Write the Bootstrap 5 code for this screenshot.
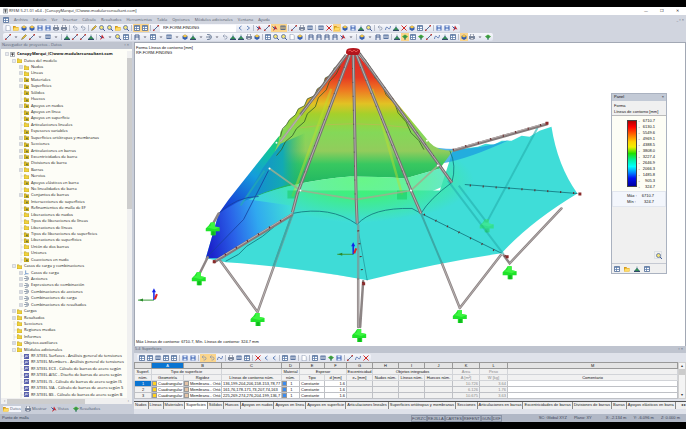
<!DOCTYPE html>
<html lang="es">
<head>
<meta charset="utf-8">
<meta name="viewport" content="width=device-width, initial-scale=1">
<title>RFEM 5.21.01 x64 - [CanopyMarqui_(C)www.modularconsultant.com]</title>
<link rel="stylesheet" href="https://cdn.jsdelivr.net/npm/bootstrap@5.3.0/dist/css/bootstrap.min.css">
<style>
  body { font: 4px/6px "Open Sans", "Noto Sans", sans-serif; color: #222; background: #000; white-space: nowrap; overflow: hidden; }
  button, select { font: inherit; color: inherit; border: 0; padding: 0; background: none; }
  a, a:hover { color: inherit; text-decoration: none; }
  svg { display: block; }
  .app { min-height: 100vh; padding: 7px 0; }
  .window { background: #d1d5df; min-width: 0; }
  .titlebar { height: 8px; background: #fff; padding: 0 4px 0 3px; }
  .titlebar .caps { gap: 12px; padding-right: 3px; }
  .menubar { height: 9px; padding: 0 2px 0 3px; gap: 5px; color: #555c6c; }
  .toolrow { height: 9px; padding-left: 3px; }
  .strip { height: 8px; background: linear-gradient(#f7f8fc, #dfe3ee); border-radius: 2px; padding: 0 1px; }
  .tool { width: 8px; height: 8px; padding: 1px; flex: none; }
  .tool.on { background: #fbd58c; }
  .tool svg { width: 6px; height: 6px; }
  .rule { width: 1px; height: 6px; background: #b8bdca; margin: 0 1px; }
  .combo { width: 76px; height: 7px; background: #fff; appearance: none; padding: 0 3px; font-family: "Liberation Sans", sans-serif; color: #111; }
  .side { width: 134px; flex: none; padding: 0 2px 0 1px; background: #c9ced9; }
  .panehead { height: 7px; background: #bfc4cf; color: #596579; padding: 0 3px 0 1px; }
  .tree { background: #fdfdf7; min-height: 0; padding-top: 2px; font-family: "Open Sans", "Noto Sans", sans-serif; color: #111; }
  .tree ul { margin: 0; padding: 0; list-style: none; }
  .tree li { flex: 1 1 0; min-height: 0; overflow: hidden; padding-left: 3px; }
  .tree li.l1 { padding-left: 10px; }
  .tree li.l2 { padding-left: 17px; }
  .twig { width: 6px; height: 6px; flex: none; }
  .leaf { width: 5px; height: 5px; flex: none; margin-right: 2px; }
  .vbar { width: 5px; background: #f0f0f0; padding-top: 7px; color: #555; }
  .vbar .thumb { height: 151px; background: #cdcdcd; }
  .hbar { height: 6px; background: #f0f0f0; color: #444; padding: 0 3px; gap: 2px; }
  .hbar .thumb { width: 78px; height: 5px; background: #cdcdcd; }
  .sidetabs { height: 10px; gap: 4px; padding: 1px 2px; color: #4c5972; }
  .sidetabs a svg { width: 6px; height: 6px; margin-right: 1px; }
  .sidetabs a.active { background: #f4f6fb; }
  .view { background: #fff; border: 1px solid #a2a8b4; border-width: 1px 1px 0 1px; font-family: "Liberation Sans", sans-serif; line-height: 5px; color: #111; }
  .view .note { padding: 2px 1px; z-index: 1; }
  .legend { top: 50px; right: 18px; width: 56px; height: 181px; background: #f0f0f0; border: 1px solid #aab2c0; font-family: "Liberation Sans", sans-serif; z-index: 2; }
  .legend .cap { height: 7px; background: #c3cad6; padding: 0 2px; }
  .legend .names { padding: 2px 2px 0; line-height: 6px; }
  .legend .scale { background: #fdfdf5; border-top: 1px solid #bbb; height: 76px; padding: 4px 11px 4px 15px; }
  .legend .ramp { width: 10px; height: 67px; border: 1px solid #444; background: linear-gradient(#b00000, #ff0000 9%, #ff5000 18%, #ffd000 32%, #f0f000 40%, #20e000 50%, #00f0a0 60%, #00ffff 70%, #0080ff 80%, #0010f0 88%, #0000a0); }
  .legend .ticks { line-height: 6px; margin: -2px 0; }
  .legend .ticks span::before { content: "-"; float: left; margin-right: 3px; }
  .legend .peaks { background: #f3f6fc; height: 16px; padding: 1px 11px 1px 14px; border: 1px solid #e2e6ee; line-height: 6px; }
  .legend .foot { height: 10px; border-top: 1px solid #c5c9d2; padding: 1px 1px; gap: 2px; }
  .lower { background: #dfe2ea; height: 68px; font-family: "Liberation Sans", sans-serif; }
  .grid { width: 100%; table-layout: fixed; border-collapse: collapse; line-height: 5px; background: #f1f1f1; color: #111; }
  .grid th, .grid td { border: 1px solid #bfc1c6; padding: 0 1px; height: 6px; font-weight: 400; overflow: hidden; }
  .grid td { padding: 0 1px 0 0; }
  .grid thead th { text-align: center; padding: 0; border-color: #d2d4d8; }
  .grid thead tr:first-child th { background: #e4e4e4; border-color: #999; }
  .grid thead tr:first-child th.sel, .grid .cur { background: #0a74d1; color: #fff; }
  .grid tbody th { text-align: center; }
  .grid tbody td.w { background: #fff; }
  .grid tbody td.text { padding-left: 1px; }
  .grid .dim { color: #8b8b8b; }
  .sw { display: inline-block; width: 5px; height: 5px; margin-right: 1px; border: 1px solid #999; vertical-align: top; }
  .yl { background: #ffd21f; } .tn { background: #e5c4a8; } .bl { background: #3b8cf0; }
  .colscroll { width: 8px; background: #f4f4f4; color: #333; font-size: 4px; border: 1px solid #d0d0d0; }
  .colscroll .thumb { height: 6px; background: #ccc; }
  .sheets { height: 8px; background: #f0f0f0; margin-top: 2px; border-top: 1px solid #555; overflow: hidden; }
  .sheets a { padding: 0 1px; border-right: 1px solid #888; line-height: 6px; height: 7px; }
  .sheets a.active { background: #fff; }
  .status { height: 8px; background: #b1b8c6; padding: 0 6px 0 2px; color: #3c4456; font-family: "Liberation Sans", sans-serif; }
  .status .modes { margin-right: 37px; }
  .status .modes button { border: 1px solid #8a93a5; line-height: 5px; }
  .status .coords { gap: 7px; }
</style>
<script src="https://cdn.jsdelivr.net/npm/bootstrap@5.3.0/dist/js/bootstrap.bundle.min.js"></script>
</head>
<body>
<svg width="0" height="0" class="position-absolute" aria-hidden="true">
  <symbol id="i-page" viewBox="0 0 12 12"><path d="M2 .5h6l2.500 3v8H2z" fill="#fff" stroke="#7583a0"/></symbol>
  <symbol id="i-open" viewBox="0 0 12 12"><path d="M0 2h5l1 2h5v7H0z" fill="#d59b18"/><path d="M2 5h10l-2 6H0z" fill="#ffdc65"/></symbol>
  <symbol id="i-save" viewBox="0 0 12 12"><path d="M1 1h10v10H1z" fill="#385fb0"/><path d="M3 1h6v4H3zM3 7h6v4H3z" fill="#dbe8fa"/></symbol>
  <symbol id="i-cube" viewBox="0 0 12 12"><path d="M1 4l5-3 5 3v5l-5 3-5-3z" fill="#355fae"/><path d="M1 4l5-3 5 3-5 3z" fill="#f4c545"/></symbol>
  <symbol id="i-print" viewBox="0 0 12 12"><path d="M0 4h12v6H0z" fill="#7a879d"/><path d="M3 0h6v5H3zM3 8h6v3H3z" fill="#fff" stroke="#56617a"/></symbol>
  <symbol id="i-undo" viewBox="0 0 12 12"><path d="M3 4h5q3 1 2 4t-5 2M5 1L2 4l3 3" fill="none" stroke="#8b97ac" stroke-width="1.500"/></symbol>
  <symbol id="i-pen" viewBox="0 0 12 12"><path d="M1 11l2-4 6-6 2 2-6 6z" fill="#edc22e" stroke="#675a32"/></symbol>
  <symbol id="i-lens" viewBox="0 0 12 12"><circle cx="5" cy="5" r="4" fill="#f3e478" stroke="#4963a0" stroke-width="1.500"/><path d="M8 8l4 4" stroke="#455e98" stroke-width="2"/></symbol>
  <symbol id="i-table" viewBox="0 0 12 12"><path d="M1 1h10v10H1z" fill="#fff" stroke="#44628f" stroke-width="1.500"/><path d="M1 3h10M1 7h10M5 1v10" stroke="#5879a9" stroke-width="1.500"/></symbol>
  <symbol id="i-node" viewBox="0 0 12 12"><path d="M1 11L11 1" stroke="#546f9b" stroke-width="2"/><path d="M0 9h3v3H0zM9 0h3v3H9z" fill="#bc3f38"/></symbol>
  <symbol id="i-frame" viewBox="0 0 12 12"><path d="M2 12V2h8v10M2 6h8" fill="none" stroke="#4c6592" stroke-width="2"/></symbol>
  <symbol id="i-support" viewBox="0 0 12 12"><path d="M6 1v4M1 10l5-6 5 6z" fill="#379848" stroke="#255b76"/><path d="M0 11h12" stroke="#314968" stroke-width="2"/></symbol>
  <symbol id="i-load" viewBox="0 0 12 12"><path d="M1 2h10M2 2v6M6 2v6M10 2v6M1 9h10" fill="none" stroke="#284b84" stroke-width="1.500"/></symbol>
  <symbol id="i-cross" viewBox="0 0 12 12"><path d="M1 1l10 10M11 1L1 11" stroke="#d12b29" stroke-width="2"/></symbol>
  <symbol id="i-curve" viewBox="0 0 12 12"><path d="M1 10Q2 1 6 6T11 2" fill="none" stroke="#4263a5" stroke-width="1.500"/></symbol>
  <symbol id="i-red" viewBox="0 0 12 12"><path d="M2 12l4-11 5 8-4-1z" fill="#c22f38"/><path d="M1 3l5 5" stroke="#2955a0" stroke-width="2"/></symbol>
  <symbol id="i-green" viewBox="0 0 12 12"><path d="M0 5l6-4 6 4-6 5z" fill="#42a73a"/><path d="M6 4v8" stroke="#376" stroke-width="2"/></symbol>
  <symbol id="i-combo" viewBox="0 0 12 12"><path d="M2 1h4q5 1 5 5t-5 5H2M0 6h8M6 3l3 3-3 3" fill="none" stroke="#3d5376" stroke-width="1.300"/></symbol>
  <symbol id="i-axes" viewBox="0 0 12 12"><path d="M4 1v8h7M4 9l-3 3" fill="none" stroke="#2c66b8" stroke-width="1.500"/></symbol>
  <symbol id="i-prev" viewBox="0 0 12 12"><path d="M9 2L4 6l5 4" fill="none" stroke="#305ca4" stroke-width="1.500"/></symbol>
  <symbol id="i-next" viewBox="0 0 12 12"><path d="M4 2l5 4-5 4" fill="none" stroke="#305ca4" stroke-width="1.500"/></symbol>
  <symbol id="i-drop" viewBox="0 0 12 12"><path d="M3 5h6L6 8z" fill="#667"/></symbol>
  <symbol id="i-fold" viewBox="0 0 12 12"><path d="M0 2h5l1 2h6v8H0z" fill="#f0d23c" stroke="#a48b20"/></symbol>
  <symbol id="i-item" viewBox="0 0 12 12"><path d="M0 2h5l1 2h6v8H0z" fill="#dfbd24" stroke="#93801f"/><path d="M4 10l3-5 3 5z" fill="#5b6e3c"/></symbol>
  <symbol id="i-mod" viewBox="0 0 12 12"><path d="M0 0h12v12H0z" fill="#5961ac"/><path d="M2 9l3-6 2 4 3-4" fill="none" stroke="#fff" stroke-width="1.500"/></symbol>
  <symbol id="i-root" viewBox="0 0 12 12"><path d="M1 1h10v10H1z" fill="#fff" stroke="#345"/><path d="M3 3h6M6 3v7M3 6h6" stroke="#222" stroke-width="1.500"/></symbol>
  <symbol id="t-plus" viewBox="0 0 6 6"><path d="M1.500 1.500h3v3h-3zM2 3h2M3 2v2" fill="#fff" stroke="#a6adba" stroke-width=".5"/></symbol>
  <symbol id="t-minus" viewBox="0 0 6 6"><path d="M1.500 1.500h3v3h-3zM2 3h2" fill="#fff" stroke="#a6adba" stroke-width=".5"/></symbol>
  <symbol id="t-none" viewBox="0 0 6 6"><path d="M3 0v6M3 3h3" stroke="#c9cbd0" stroke-width=".5"/></symbol>
</svg>

<div class="app d-flex flex-column">
<div class="window d-flex flex-column flex-fill">
  <header>
    <div class="titlebar d-flex align-items-center justify-content-between">
      <span class="d-flex align-items-center"><svg width="5" height="6"><use href="#i-root"/></svg><span>&nbsp;RFEM 5.21.01 x64 - [CanopyMarqui_(C)www.modularconsultant.com]</span></span>
      <span class="caps d-flex"><button aria-label="Minimizar">—</button><button aria-label="Restaurar">❐</button><button aria-label="Cerrar">✕</button></span>
    </div>
    <nav class="menubar d-flex align-items-center">
      <svg width="6" height="6"><use href="#i-table"/></svg>
      <a href="#">Archivo</a><a href="#">Edición</a><a href="#">Ver</a><a href="#">Insertar</a><a href="#">Cálculo</a><a href="#">Resultados</a><a href="#">Herramientas</a><a href="#">Tabla</a><a href="#">Opciones</a><a href="#">Módulos adicionales</a><a href="#">Ventana</a><a href="#">Ayuda</a>
      <span class="ms-auto">_ ▫ ×</span>
    </nav>
    <div class="toolrow d-flex">
      <div class="strip d-flex align-items-center">
        <div class="d-flex align-items-center" data-tools="page open cube cube save save print print | undo undo | pen lens lens open lens | *table *table | node"></div>
        <select class="combo" aria-label="Caso de carga"><option>RF-FORM-FINDING</option></select>
        <div class="d-flex align-items-center" data-tools="prev next | red node *red *load | node print load | load cross *open cube save support lens | undo curve support cross cube table node | save save red"></div>
      </div>
    </div>
    <div class="toolrow d-flex">
      <div class="strip d-flex align-items-center" data-tools="node drop pen node drop load drop | support node node support | red drop lens table | frame drop table drop load drop cube support drop combo drop undo support support print cube | table lens lens page cube | frame frame frame frame red drop | cube drop frame load | support *green table green node curve support table | *cube print drop green"></div>
    </div>
  </header>

  <div class="d-flex flex-fill">
    <aside class="side d-flex flex-column">
      <div class="panehead d-flex justify-content-between"><span>Navegador de proyectos - Datos</span><span>▫ ×</span></div>
      <div class="tree d-flex flex-fill">
        <ul class="d-flex flex-column flex-fill overflow-hidden" id="tree"></ul>
        <div class="vbar"><div class="thumb"></div></div>
      </div>
      <div class="hbar d-flex align-items-center"><span>‹</span><span class="thumb"></span><span class="ms-auto">›</span></div>
      <nav class="sidetabs d-flex align-items-center">
        <a href="#" class="active d-flex align-items-center"><svg><use href="#i-open"/></svg>Datos</a>
        <a href="#" class="d-flex align-items-center"><svg><use href="#i-print"/></svg>Mostrar</a>
        <a href="#" class="d-flex align-items-center"><svg><use href="#i-red"/></svg>Vistas</a>
        <a href="#" class="d-flex align-items-center"><svg><use href="#i-green"/></svg>Resultados</a>
      </nav>
    </aside>

    <main class="d-flex flex-column flex-fill overflow-hidden">
      <section class="view position-relative d-flex flex-column justify-content-between flex-fill">
        <svg class="position-absolute top-0 start-0 w-100 h-100" viewBox="134 42 552 304" role="img" aria-label="Modelo de membrana">
          <defs>
            <linearGradient id="cone" gradientUnits="userSpaceOnUse" x1="0" y1="50" x2="0" y2="182">
              <stop offset="0" stop-color="#d8282c"/><stop offset=".2" stop-color="#e63a22"/><stop offset=".3" stop-color="#ee7a22"/><stop offset=".4" stop-color="#e2c224"/><stop offset=".48" stop-color="#a4d02c"/><stop offset=".62" stop-color="#84d858"/><stop offset=".76" stop-color="#92cc5c"/><stop offset=".86" stop-color="#38c860"/><stop offset="1" stop-color="#22b862"/>
            </linearGradient>
            <linearGradient id="flank" gradientUnits="userSpaceOnUse" x1="284" y1="132" x2="214" y2="216">
              <stop offset="0" stop-color="#30cc58"/><stop offset=".22" stop-color="#10c49c"/><stop offset=".48" stop-color="#159ddb"/><stop offset=".78" stop-color="#164fd8"/><stop offset="1" stop-color="#1522c4"/>
            </linearGradient>
            <linearGradient id="skirt" gradientUnits="userSpaceOnUse" x1="208" y1="238" x2="292" y2="222">
              <stop offset="0" stop-color="#1c24cc"/><stop offset=".3" stop-color="#2a62e8"/><stop offset=".6" stop-color="#30a8f0"/><stop offset="1" stop-color="#3fddd8"/>
            </linearGradient>
            <linearGradient id="inner" gradientUnits="userSpaceOnUse" x1="248" y1="0" x2="305" y2="0"><stop offset="0" stop-color="#1586d8"/><stop offset=".6" stop-color="#12a9b4"/><stop offset="1" stop-color="#22b862" stop-opacity="0"/></linearGradient>
            <radialGradient id="glow" gradientUnits="userSpaceOnUse" cx="0" cy="0" r="1" gradientTransform="translate(362 180) scale(112 42)">
              <stop offset="0" stop-color="#42f46c"/><stop offset=".4" stop-color="#40ee84"/><stop offset="1" stop-color="#3fddd8"/>
            </radialGradient>
            <g id="foot"><path d="M-2-5h4v4l5 1v4H3v4h-5V4h-5V1l3-3z" fill="#1fe32a"/><path d="M-2-5h4v4l5 1-5 2-8-2 4-2z" fill="#3cf540"/><path d="M-1 4h3v4h-3z" fill="#12b81f"/></g>
            <path id="wave" d="M346 54l-5 5-1 5-6 3-3 7-6 3-2 7-6 4-3 7-7 3-3 7-6 3-3 6-6 5-3 5-4 4-2 8"/>
          </defs>
          <!-- membrane -->
          <path d="M453 150L470 147 478 146 486 143 494 144 502 140 512 140 522 135 530 136 540 130 552 126Q558 165 578 193Q530 222 502 253Q440 262 367 280Q300 267 225 262L205 258 218 213 250 190H440z" fill="url(#glow)"/>
          <path d="M437 147Q470 152 510 139Q470 158 441 163z" fill="#1b9ce0" opacity=".75"/>
          <path d="M218 213L250 190 298 183Q285 200 292 213L222 258 205 258z" fill="url(#skirt)"/>
          <path d="M278 136L228 199 218 213Q238 200 250 196L300 182 320 110z" fill="url(#flank)"/>
          <path d="M346 54L341 59 340 64 334 67 331 74 325 77 323 84 317 88 314 95 307 98 304 105 298 108 295 114 289 119 286 124 280 131 278 141 268 168 248 199Q290 181 350 176Q380 176 405 178L440 168 453 150Q437 150 430 142L395 100 358 54z" fill="url(#cone)"/>
          <path d="M280 143L262 168 243 201Q275 186 305 180L310 130z" fill="url(#inner)"/>
          <path d="M248 199Q290 181 350 176Q380 176 405 178L440 168 452 182 400 205H290z" fill="url(#glow)" opacity=".8"/>
          <g fill="none" stroke="#d2a85a" stroke-width=".8" opacity=".6"><path d="M300 127Q350 119 410 127"/></g>
          <!-- rear columns seen through the membrane -->
          <g stroke="#bfe02c" stroke-width="2.500" opacity=".45"><path d="M331 88L292 196M372 88L402 194"/></g>
          <g fill="#14c85a" opacity=".5"><path d="M287 190h10v8h-10zM397 190h10v9h-10z"/></g>
          <g stroke="#25afae" stroke-width="2" opacity=".6"><path d="M538 127L487 222M448 180L504 254M459 185L487 222M264 170L240 205"/></g>
          <use href="#foot" x="487" y="224" opacity=".4"/>
          <!-- ring and seams -->
          <path d="M269 168L300 190 356 199 411 190 438 165" fill="none" stroke="#9fae8e" stroke-width="1.800" opacity=".85"/>
          <g fill="none" stroke="#107078" stroke-width=".8"><path d="M292 213Q330 205 357 224Q372 207 412 208L421 213Q430 198 452 182Q457 165 450 150"/><path d="M225 261L238 254 246 246 262 236 280 221 292 213"/><path d="M357 224L367 280M421 213L502 253M465 184L578 193"/><path d="M205 258L243 219 268 170M218 213Q236 196 258 196" stroke="#1740a0"/></g>
          <g fill="none" stroke="#355d28" stroke-width=".8"><use href="#wave"/><path d="M340 65l-4 8-7 8-3 8-8 8-3 9-8 7-3 8-8 7-4 7-7 6-4 8-5 6"/><path d="M364 57l8 12 3 8 8 9 3 8 9 9 3 9 8 9 5 11 8 8 5 9"/></g>
          <!-- legs -->
          <g stroke-linecap="round"><path stroke="#8d8585" stroke-width="2.500" fill="none" d="M292 214L257 312M220 261L257 312M358 225V327M363 281L360 327M442 263L460 308M501 255L460 308M562 208L510 263 504 255M207 257L199 273M218 213L213 222"/>
          <path d="M292 214L257 312M220 261L257 312M358 280V327M442 263L460 308M501 255L460 308M562 208L510 263" stroke="#c2baba" stroke-width=".8" fill="none"/></g>
          <path d="M274 266L292 214 357 224 421 213 442 262 367 279z" fill="#3fddd8" opacity=".4"/>
          <path d="M421 213L442 263M292 213L273 266" stroke="#3aa9a7" stroke-width="2"/>
          <!-- masts -->
          <g fill="none" stroke="#777173" stroke-width="3"><path d="M350 53L297 193 292 212M353 53L356 199 357 223M356 53L411 190 421 213M359 52L452 182M346 54L300 114"/></g>
          <path d="M300 114L280 141" stroke="#a59e96" stroke-width="2"/>
          <g fill="none" stroke="#b9b2b2" stroke-width="1"><path d="M350 53L297 193 292 212M353 53L356 199 357 223M356 53L411 190 421 213M359 52L452 182M346 54L280 141"/></g>
          <g fill="none" stroke="#5c5553" stroke-width="1" stroke-dasharray="1 13"><path d="M349 53L296 193M352 53L355 199M355 53L410 190M360 52L453 182"/></g>
          <!-- booms -->
          <g fill="none" stroke="#857a7a" stroke-width="3"><path d="M213 262L292 214M453 150L548 123"/></g>
          <path d="M213 261L292 213M453 149L548 122" stroke="#b9aeae" stroke-width="1"/>
          <g fill="none" stroke="#622" stroke-width="2" stroke-dasharray="1 12"><path d="M213 261L284 218M453 149L548 122.500M470 185L582 193M424 214L508 257M358 230L363 284" /></g>
          <path d="M579 192h3v3h-3zM506 255h3v3h-3zM362 282h3v3h-3zM546 121h3v3h-3zM212 260h3v3h-3z" fill="#8a2b2b"/>
          <path d="M346 50q0-3 7-3t7 3-2 4h-10q-3-1-2-4z" fill="#b3151c"/><path d="M348 50l2-1 2 2 2-2 2 2 2-2" fill="none" stroke="#f05c58"/>
          <g fill="#fff"><circle cx="276" cy="142" r="1"/><circle cx="269" cy="168" r="1"/><circle cx="300" cy="190" r="1"/><circle cx="411" cy="190" r="1"/><circle cx="438" cy="165" r="1"/><circle cx="427" cy="140" r="1"/></g>
          <use href="#foot" x="198" y="277"/><use href="#foot" x="212" y="227"/><use href="#foot" x="257" y="318"/><use href="#foot" x="359" y="334"/><use href="#foot" x="460" y="315"/><use href="#foot" x="510" y="271"/>
          <!-- coordinate systems -->
          <g id="axes"><path d="M153 300H137" stroke="#3a9b3a"/><path d="M138 300l4-1.500v3z" fill="#2a8a2a"/><path d="M153 300V291" stroke="#1322e8" stroke-width="1.500"/><path d="M151 292h4l-2-4z" fill="#1322e8"/><path d="M154 299l2-5" stroke="#e02222" stroke-width="2"/></g>
          <use href="#axes" x="200" y="-46"/>
        </svg>
        <div class="note">Forma Líneas de contorno [mm]<br>RF-FORM-FINDING</div>
        <div class="note">Máx Líneas de contorno: 6710.7, Mín. Líneas de contorno: 324.7 mm</div>
        <div class="legend position-absolute d-flex flex-column">
          <div class="cap d-flex justify-content-between"><span>Panel</span><span>×</span></div>
          <div class="names">Forma<br>Líneas de contorno [mm]</div>
          <div class="scale d-flex justify-content-between"><div class="ramp"></div>
            <div class="ticks text-end d-flex flex-column justify-content-between"><span>6710.7</span><span>6130.1</span><span>5549.6</span><span>4969.1</span><span>4388.5</span><span>3808.0</span><span>3227.4</span><span>2646.9</span><span>2066.3</span><span>1485.8</span><span>905.3</span><span>324.7</span></div>
          </div>
          <div class="peaks"><div class="d-flex justify-content-between"><span>Máx :</span><span>6710.7</span></div><div class="d-flex justify-content-between"><span>Mín :</span><span>324.7</span></div></div>
          <div class="mt-auto d-flex justify-content-end p-1"><button class="tool border" aria-label="Ampliar"><svg><use href="#i-lens"/></svg></button></div>
          <div class="foot d-flex" data-tools="table open support table"></div>
        </div>
      </section>

      <section class="lower">
        <div class="panehead d-flex justify-content-between"><span>5.4 Superficies</span><span>▫ ×</span></div>
        <div class="toolrow d-flex align-items-center"><div class="strip d-flex align-items-center" data-tools="table table load table table | save save | *undo *undo curve | print load table | cross prev prev | table load | page | table load green save | node curve cross"></div></div>
        <div class="d-flex">
          <table class="grid">
            <colgroup><col width="17"><col width="32"><col width="38"><col width="60"><col width="18"><col width="25"><col width="22"><col width="26"><col width="26"><col width="26"><col width="28"><col width="27"><col width="28"><col></colgroup>
            <thead>
              <tr><th></th><th class="sel">A</th><th>B</th><th>C</th><th>D</th><th>E</th><th>F</th><th>G</th><th>H</th><th>I</th><th>J</th><th>K</th><th>L</th><th>M</th></tr>
              <tr><th>Superf.</th><th colspan="2">Tipo de superficie</th><th></th><th>Material</th><th colspan="2">Espesor</th><th>Excentricidad</th><th colspan="3">Objetos integrados</th><th class="dim">Área</th><th class="dim">Peso</th><th></th></tr>
              <tr><th>núm.</th><th>Geometría</th><th>Rigidez</th><th>Líneas de contorno núm.</th><th>núm.</th><th>Tipo</th><th>d [mm]</th><th>e₂ [mm]</th><th>Nudos núm.</th><th>Líneas núm.</th><th>Huecos núm.</th><th class="dim">A [m²]</th><th class="dim">W [kg]</th><th>Comentario</th></tr>
            </thead>
            <tbody id="rows"></tbody>
          </table>
          <div class="colscroll d-flex flex-column text-center"><span>▴</span><span class="thumb"></span><span class="mt-auto">▾</span></div>
        </div>
        <nav class="sheets d-flex"><a href="#">Nudos</a><a href="#">Líneas</a><a href="#">Materiales</a><a href="#" class="active">Superficies</a><a href="#">Sólidos</a><a href="#">Huecos</a><a href="#">Apoyos en nudos</a><a href="#">Apoyos en línea</a><a href="#">Apoyos en superficie</a><a href="#">Articulaciones lineales</a><a href="#">Superficies ortótropas y membranas</a><a href="#">Secciones</a><a href="#">Articulaciones en barras</a><a href="#">Excentricidades de barras</a><a href="#">Divisiones de barras</a><a href="#">Barras</a><a href="#">Apoyos elásticos en barra</a><span class="ms-auto">◂ ▸</span></nav>
      </section>
    </main>
  </div>

  <footer class="status d-flex align-items-center">
    <span class="me-auto">Punto de malla</span>
    <span class="modes d-flex"><button>FORZC</button><button>REJILLA</button><button>CARTES</button><button>REFENT</button><button>GUN</button><button>DXF</button></span>
    <span class="coords d-flex"><span>SC: Global XYZ</span><span>Plano: XY</span><span></span><span>X: -2.134 m</span><span>Y: -6.096 m</span><span>Z: 0.000 m</span></span>
  </footer>
</div>
</div>

<script>
  const use = (id, cls) => `<svg class="${cls}" aria-hidden="true"><use href="#${id}"/></svg>`;

  document.querySelectorAll('[data-tools]').forEach(bar => {
    bar.innerHTML = bar.dataset.tools.split(' ').map(name => {
      if (name === '|') return '<span class="rule"></span>';
      const on = name[0] === '*';
      const id = on ? name.slice(1) : name;
      return `<button class="tool${on ? ' on' : ''}" aria-label="${id}">${use('i-' + id, '')}</button>`;
    }).join('');
  });

  // level, twig (+ - or .), icon, label
  const nodes = `0 - root CanopyMarqui_(C)www.modularconsultant.com
1 - fold Datos del modelo
2 + fold Nudos
2 + fold Líneas
2 + item Materiales
2 + item Superficies
2 . item Sólidos
2 . item Huecos
2 + item Apoyos en nudos
2 . item Apoyos en línea
2 . item Apoyos en superficie
2 . fold Articulaciones lineales
2 . item Espesores variables
2 + item Superficies ortótropas y membranas
2 + item Secciones
2 + item Articulaciones en barras
2 + item Excentricidades de barra
2 . item Divisiones de barra
2 + fold Barras
2 . fold Nervios
2 . item Apoyos elásticos en barra
2 . fold No linealidades de barra
2 + item Conjuntos de barras
2 . item Intersecciones de superficies
2 . item Refinamientos de malla de EF
2 . fold Liberaciones de nudos
2 . fold Tipos de liberaciones de líneas
2 . fold Liberaciones de líneas
2 . item Tipos de liberaciones de superficies
2 . item Liberaciones de superficies
2 . fold Unión de dos barras
2 . fold Uniones
2 . item Coacciones en nudo
1 - fold Casos de carga y combinaciones
2 + axes Casos de carga
2 + combo Acciones
2 + combo Expresiones de combinación
2 + combo Combinaciones de acciones
2 + combo Combinaciones de carga
2 + combo Combinaciones de resultados
1 + fold Cargas
1 + fold Resultados
1 . fold Secciones
1 . fold Regiones medias
1 . fold Informes
1 + fold Objetos auxiliares
1 - fold Módulos adicionales
2 . mod RF-STEEL Surfaces - Análisis general de tensiones
2 . mod RF-STEEL Members - Análisis general de tensiones
2 . mod RF-STEEL EC3 - Cálculo de barras de acero según
2 . mod RF-STEEL AISC - Diseño de barras de acero según
2 . mod RF-STEEL IS - Cálculo de barras de acero según IS
2 . mod RF-STEEL SIA - Cálculo de barras de acero según S
2 . mod RF-STEEL BS - Cálculo de barras de acero según B`;
  const twigs = { '+': 't-plus', '-': 't-minus', '.': 't-none' };
  document.getElementById('tree').innerHTML = nodes.split('\n').map(line => {
    const [, level, twig, icon, label] = line.match(/^(\d) (\S) (\S+) (.*)$/);
    return `<li class="l${level} d-flex align-items-center${level === '0' ? ' fw-bold' : ''}">${use(twigs[twig], 'twig')}${use('i-' + icon, 'leaf')}<span>${label}</span></li>`;
  }).join('');

  const rows = [
    ['136,199-204,206,158-153,78,77', '10.726', '3.64'],
    ['161,76,178-171,73,207,74,163', '6.126', '1.76'],
    ['225,269-274,276,204-199,136,7', '10.675', '3.63']
  ];
  document.getElementById('rows').innerHTML = rows.map((r, i) => `<tr>
    <th class="${i ? '' : 'cur'}">${i + 1}</th><td class="w"><span class="sw yl"></span>Cuadrangular</td>
    <td class="w"><span class="sw tn"></span>Membrana - Ortó</td><td class="w text">${r[0]}</td>
    <td class="w"><span class="sw bl"></span>&nbsp; 1</td><td class="w text">Constante</td><td class="w text-end">1.6</td>
    <td></td><td></td><td></td><td></td><td class="dim text-end">${r[1]}</td><td class="dim text-end">${r[2]}</td><td class="w"></td></tr>`).join('');
</script>
</body>
</html>
